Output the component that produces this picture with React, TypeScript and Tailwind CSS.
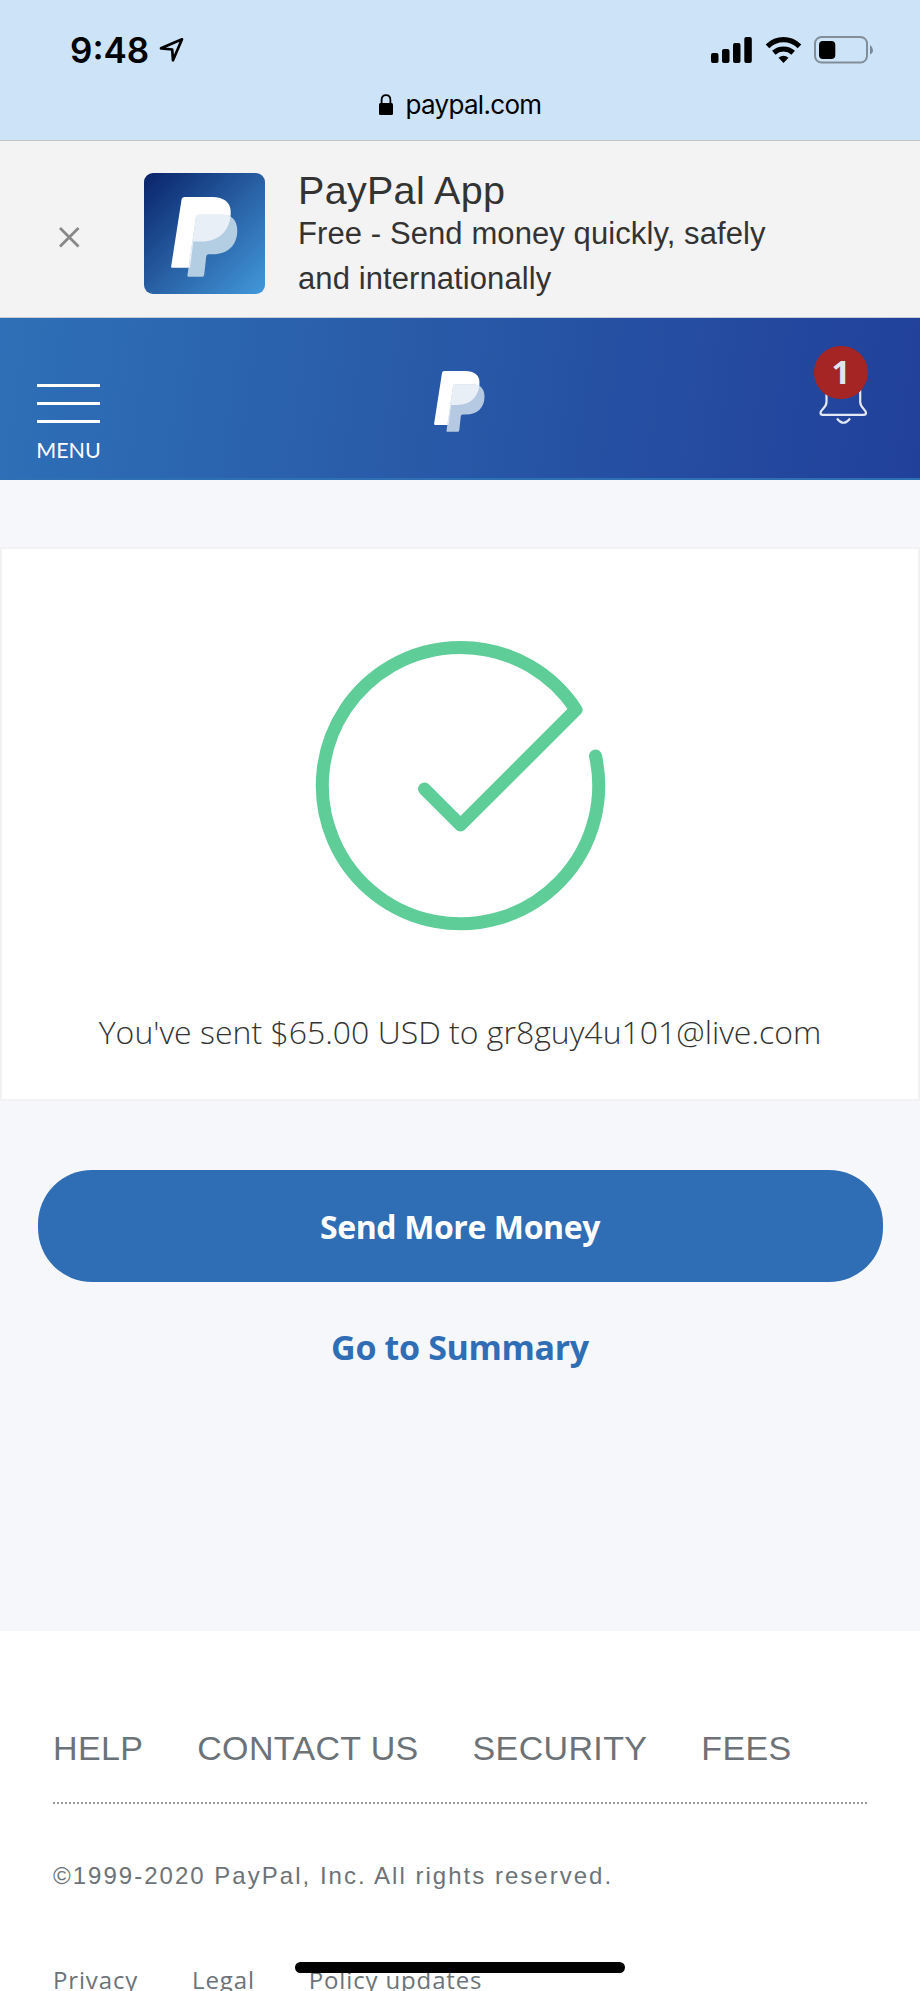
import { useId } from 'react';

const footerLinks = ['HELP', 'CONTACT US', 'SECURITY', 'FEES'];
const legalLinks = ['Privacy', 'Legal', 'Policy updates'];

function PayPalMark({ className, shade }: { className: string; shade: string }) {
  const id = useId();
  const back =
    'M10.5 0H31.5C40 0 45.5 4 45.5 11.5C45.5 25 37 34 23 34H17L14.5 54H1C.2 54 0 53.500 .1 52.800L8 2C8.200 .700 9 0 10.500 0Z';
  const front =
    'M21.500 13.500H40C46.500 13.500 50.500 18 50.500 25.500C50.500 36.500 43.500 43.600 32 43.600H29C27.500 43.600 27 44.300 26.800 45.500L25.300 59C25.100 60.300 24.600 60.800 23.500 60.800H13.500C12.700 60.800 12.400 60.300 12.500 59.500L19 15.500C19.200 14.200 20 13.500 21.500 13.500Z';
  return (
    <svg className={className} viewBox="0 0 51 61" fill="none">
      <clipPath id={id}>
        <path d={front} />
      </clipPath>
      <path d={back} fill="#fff" />
      <path d={front} fill={shade} />
      <path d={back} fill="#e8eff6" clipPath={`url(#${id})`} />
    </svg>
  );
}

function StatusBar() {
  return (
    <div className="flex h-[141px] flex-col border-b border-[#c3c5c8] bg-[#cde4f8] text-black">
      <div className="flex h-[80px] items-end justify-between pr-[46px] pl-[70px]">
        <div className="flex items-end gap-[10px]">
          <span className="mb-[9px] font-['Inter'] text-[35px] leading-[42px] font-semibold">9:48</span>
          <svg className="mb-[17px] h-[26px] w-[26px]" viewBox="0 0 26 26" fill="none">
            <path
              d="M2 11.300L23 2.300L14 23.300L13.200 12.500Z"
              stroke="currentColor"
              strokeWidth="2.700"
              strokeLinejoin="round"
            />
          </svg>
        </div>
        <div className="mb-[16px] flex items-center">
          <svg className="h-[28px] w-[42px]" viewBox="0 0 42 28" fill="currentColor">
            <rect x="0" y="17" width="7.500" height="10" rx="2" />
            <rect x="11" y="13" width="7.500" height="14" rx="2" />
            <rect x="22" y="7" width="7.500" height="20" rx="2" />
            <rect x="33.300" y="1" width="7.500" height="26" rx="2" />
          </svg>
          <svg className="ml-[12px] h-[28px] w-[38px]" viewBox="0 0 38 28" fill="none" stroke="currentColor" strokeWidth="5.200">
            <path d="M2.500 10.300Q9.500 3.600 18.500 3.600T34.500 10.300" />
            <path d="M8.800 16.800Q13 13 18.500 13T28.200 16.800" />
            <path d="M13.500 21.800Q18.500 17.600 23.500 21.800L18.500 27Z" fill="currentColor" stroke="none" />
          </svg>
          <svg className="ml-[11px] h-[28px] w-[60px]" viewBox="0 0 60 28" fill="none">
            <rect x="1" y="1" width="52" height="25.500" rx="6.500" stroke="#818e9a" strokeWidth="2" />
            <rect x="5" y="5" width="16.300" height="18" rx="4" fill="#000" />
            <path d="M56 9Q59 11 59 14T56 18.500Z" fill="#7c8894" />
          </svg>
        </div>
      </div>
      <div className="flex justify-center gap-[12px] pt-[9px] pr-px">
        <svg className="mt-[5px] h-[22px] w-[16px]" viewBox="0 0 16 22" fill="none">
          <rect x="1" y="9" width="14" height="12" rx="1.500" fill="#000" />
          <path d="M3.600 10V6Q3.600 1.200 8 1.200T12.400 6V10" stroke="#000" strokeWidth="1.800" />
        </svg>
        <span className="font-['Inter'] text-[26px] leading-[32px] tracking-[-0.700px]">paypal.com</span>
      </div>
    </div>
  );
}

function AppBanner() {
  return (
    <div className="flex h-[177px] border-b border-[#c8ccd4] bg-[#f3f3f3] font-['Liberation_Sans'] text-[#333]">
      <svg className="mt-[86px] ml-[59px] h-[21px] w-[21px]" viewBox="0 0 21 21" stroke="#888" strokeWidth="2.800">
        <path d="M1 1L19.500 19.500M19.500 1L1 19.500" />
      </svg>
      <div className="mt-[32px] ml-[64px] flex h-[121px] w-[121px] items-start rounded-[9px] bg-linear-to-br from-[#0b226a] via-[#285fa3] to-[#4299da] pt-[24px] pl-[27px]">
        <PayPalMark className="h-[80px] w-[67px]" shade="#b3cde2" />
      </div>
      <div className="mt-[26px] ml-[33px]">
        <h1 className="h-[45px] overflow-hidden text-[39.500px] leading-[47px] tracking-[0.300px] whitespace-nowrap">
          PayPal App
        </h1>
        <p className="w-[500px] text-[31px] leading-[44.500px] tracking-[0.090px]">
          Free - Send money quickly, safely
          <br />
          and internationally
        </p>
      </div>
    </div>
  );
}

function Header() {
  return (
    <header className="flex h-[162px] justify-between border-b-2 border-[#2f70b5] bg-[linear-gradient(98deg,#2e70b7_0%,#2858a7_50%,#21409a_100%)] pr-[46px] pl-[37px]">
      <button className="mt-[66px] flex w-[63px] flex-col items-center">
        <span className="h-[2.500px] w-full bg-white" />
        <span className="mt-[15.500px] h-[2.500px] w-full bg-white" />
        <span className="mt-[15.500px] h-[2.500px] w-full bg-white" />
        <span className="mt-[13px] font-['Lato'] text-[21.500px] leading-[28px] text-white">MENU</span>
      </button>
      <PayPalMark className="mt-[53px] ml-[4px] h-[61px] w-[51px]" shade="#b6c9e2" />
      <div className="relative mt-[28px] h-[80px] w-[60px]">
        <svg className="absolute top-0 left-0 h-[80px] w-[60px]" viewBox="0 0 60 80" fill="none" stroke="#e3e8f4" strokeWidth="2.200">
          <path d="M12.500 44V56C12.500 62 6.500 63.500 6.500 67Q6.500 68.800 8.800 68.800H49.500Q52 68.800 52 67C52 63.500 46.200 62 46.200 56V44" />
          <path d="M23 72.500Q29.500 81 36 72.500" />
        </svg>
        <span className="absolute top-0 left-0 flex h-[53px] w-[54px] items-center justify-center rounded-full bg-[#a52424] pb-[2px] font-['Open_Sans'] text-[33px] leading-none font-bold text-[#dfe6f2]">
          1
        </span>
      </div>
    </header>
  );
}

function SentCard() {
  return (
    <section className="flex h-[554px] flex-col items-center border-2 border-[#f2f2f3] bg-white">
      <svg className="mt-[91px] h-[291px] w-[291px]" viewBox="0 0 291 291" fill="none">
        <path
          d="M280.500 116A138.200 138.200 0 1 1 261 69.700L145.500 185L109.500 149"
          stroke="#5ecd98"
          strokeWidth="13"
          strokeLinecap="round"
          strokeLinejoin="round"
        />
      </svg>
      <p className="mt-[79px] font-['Open_Sans'] text-[32px] leading-[44px] font-light whitespace-nowrap text-[#333]">
        You've sent $65.00 USD to gr8guy4u101@live.com
      </p>
    </section>
  );
}

function Footer() {
  return (
    <footer className="h-[360px] bg-white px-[53px] pt-[85px] font-['Liberation_Sans'] text-[#6c7378]">
      <nav className="flex h-[88px] gap-[54px] border-b-2 border-dotted border-[#999] text-[34px] leading-[64px] tracking-[0.350px] whitespace-nowrap">
        {footerLinks.map((link) => (
          <a key={link}>{link}</a>
        ))}
      </nav>
      <p className="mt-[56px] text-[24px] leading-[32px] tracking-[2.020px]">©1999-2020 PayPal, Inc. All rights reserved.</p>
      <nav className="mt-[70px] flex gap-[54px] font-['Open_Sans'] text-[24px] leading-[36px] font-medium tracking-[0.850px] whitespace-nowrap">
        {legalLinks.map((link) => (
          <a key={link}>{link}</a>
        ))}
      </nav>
    </footer>
  );
}

export default function App() {
  return (
    <div className="relative h-[1991px] w-[920px] overflow-hidden bg-[#f5f7fb]">
      <StatusBar />
      <AppBanner />
      <Header />
      <main className="h-[1151px] pt-[67px]">
        <SentCard />
        <div className="flex flex-col items-center px-[37.500px] pt-[69px] font-['Open_Sans'] font-bold">
          <button className="h-[112px] w-full rounded-[54px] bg-[#2f6eb5] pt-[2px] text-[32px] tracking-[-0.400px] text-white">
            Send More Money
          </button>
          <a className="mt-[43px] text-[34px] leading-[44px] tracking-[-0.350px] text-[#2f6eb5]">Go to Summary</a>
        </div>
      </main>
      <Footer />
      {/* home indicator */}
      <div className="absolute top-[1962px] left-[295px] h-[11px] w-[330px] rounded-full bg-black" />
    </div>
  );
}
